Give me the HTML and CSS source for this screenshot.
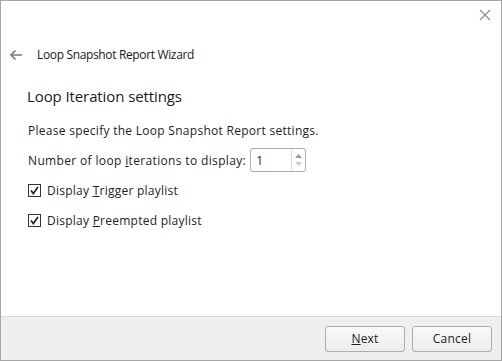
FILE: index.html
```html
<!DOCTYPE html>
<html>
<head>
<meta charset="utf-8">
<link rel="stylesheet" href="styles.css">
</head>
<body>
<div class="window">
  <div class="titlebar">
    <svg class="close" width="12" height="12" viewBox="0 0 12 12"><path d="M1 1L11 11M11 1L1 11" stroke="#8a8a8a" stroke-width="1.1" fill="none"/></svg>
  </div>
  <div class="navrow">
    <svg class="back" width="14" height="12" viewBox="0 0 14 12"><path d="M13 6H2M6.5 1.5L2 6l4.5 4.5" stroke="#7a7a7a" stroke-width="1.6" fill="none"/></svg>
    <span class="wiztitle">Loop Snapshot Report Wizard</span>
  </div>
  <div class="content">
    <h1 class="heading">Loop Iteration settings</h1>
    <p class="desc">Please specify the Loop Snapshot Report settings.</p>
    <div class="numrow">
      <span>Number of loop <u>i</u>terations to display:</span>
      <div class="spin">
        <span class="spinval">1</span>
        <div class="spinbtns">
          <svg width="9" height="6" viewBox="0 0 9 6"><path d="M4.5 1L8 5H1z" fill="#9a9a9a"/></svg>
          <svg width="9" height="6" viewBox="0 0 9 6"><path d="M4.5 5L8 1H1z" fill="#c8c8c8"/></svg>
        </div>
      </div>
    </div>
    <label class="check"><span class="box"><svg width="11" height="11" viewBox="0 0 11 11"><path d="M2 5.5L4.3 8.5L9 2" stroke="#222" stroke-width="1.7" fill="none"/></svg></span><span>Display <u>T</u>rigger playlist</span></label>
    <label class="check"><span class="box"><svg width="11" height="11" viewBox="0 0 11 11"><path d="M2 5.5L4.3 8.5L9 2" stroke="#222" stroke-width="1.7" fill="none"/></svg></span><span>Display <u>P</u>reempted playlist</span></label>
  </div>
  <div class="footer">
    <button class="btn"><u>N</u>ext</button>
    <button class="btn">Cancel</button>
  </div>
</div>
</body>
</html>
```
FILE: styles.css
```css
html, body {
  margin: 0;
  padding: 0;
  background: #fff;
}
body {
  font-family: "Open Sans", "Noto Sans", sans-serif;
  font-size: 12px;
  color: #1e1e1e;
}
.window {
  width: 502px;
  height: 361px;
  box-sizing: border-box;
  border: 1px solid #a6a6a6;
  display: flex;
  flex-direction: column;
  background: #fff;
}
.titlebar {
  height: 30px;
  display: flex;
  justify-content: flex-end;
  align-items: flex-start;
  padding: 8px 10px 0 0;
  box-sizing: border-box;
}
.close { display: block; }
.navrow {
  height: 48px;
  display: flex;
  align-items: center;
  padding-left: 8px;
  box-sizing: border-box;
  padding-bottom: 1px;
}
.back { margin-right: 14px; }
.wiztitle {
  font-size: 12px;
  letter-spacing: -0.35px;
  color: #1a1a1a;
}
.content {
  flex: 1;
  padding: 6px 0 0 26px;
}
.heading {
  margin: 0;
  font-size: 15px;
  font-weight: normal;
  letter-spacing: -0.1px;
  line-height: 22px;
  color: #1a1a1a;
}
.desc {
  margin: 16px 0 0 1px;
  line-height: 16px;
  letter-spacing: 0.28px;
}
.numrow {
  display: flex;
  align-items: center;
  margin: 9px 0 0 1px;
  letter-spacing: 0.35px;
}
.spin {
  margin-left: 4px;
  width: 56px;
  height: 24px;
  box-sizing: border-box;
  border: 1px solid #acacac;
  border-radius: 3px;
  display: flex;
  align-items: center;
}
.spinval {
  flex: 1;
  padding-left: 5px;
}
.spinbtns {
  width: 13px;
  height: 100%;
  border-left: 1px solid #dcdcdc;
  display: flex;
  flex-direction: column;
  align-items: center;
  justify-content: center;
  gap: 2px;
}
.spinbtns svg { display: block; }
.check {
  display: flex;
  align-items: center;
  margin: 8px 0 0 1px;
  height: 21px;
  letter-spacing: 0.25px;
}
.check + .check { margin-top: 9px; }
.box {
  width: 13px;
  height: 13px;
  box-sizing: border-box;
  border: 1px solid #333;
  margin-right: 6px;
  display: flex;
  align-items: center;
  justify-content: center;
}
.box svg { display: block; }
.footer {
  height: 44px;
  box-sizing: border-box;
  border-top: 1px solid #dadada;
  background: #efefef;
  display: flex;
  justify-content: flex-end;
  align-items: center;
  gap: 7px;
  padding-right: 9px;
}
.btn {
  width: 80px;
  height: 26px;
  box-sizing: border-box;
  border: 1px solid #adadad;
  border-radius: 3px;
  background: linear-gradient(#f9f9f9, #ececec);
  font-family: "Open Sans", "Noto Sans", sans-serif;
  font-size: 12px;
  color: #1e1e1e;
  padding: 0;
  letter-spacing: 0.2px;
}
```
